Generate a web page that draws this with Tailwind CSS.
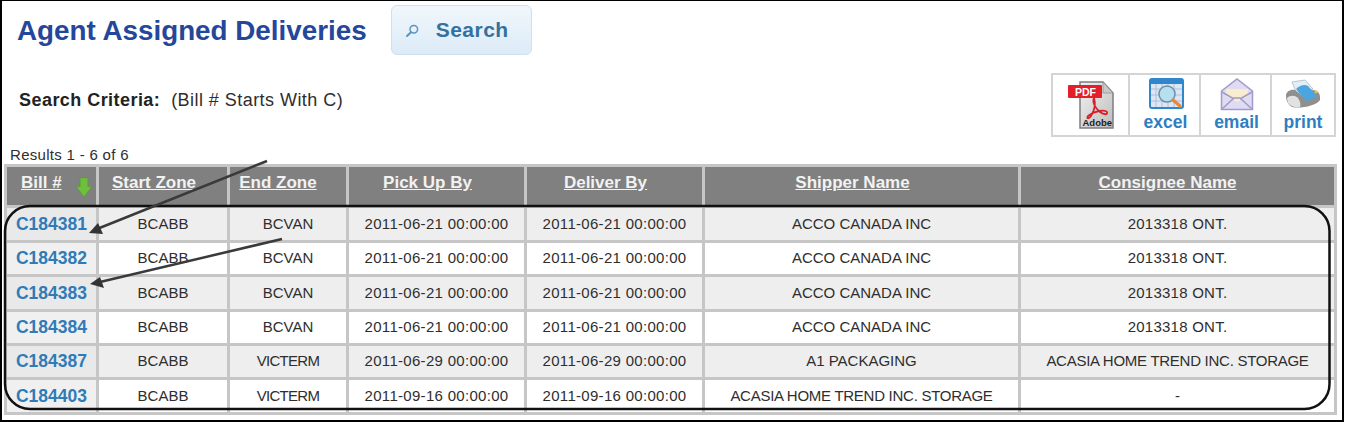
<!DOCTYPE html>
<html>
<head>
<meta charset="utf-8">
<script src="https://cdn.jsdelivr.net/npm/@tailwindcss/browser@4"></script>
</head>
<body class="bg-white">
<div class="relative w-[1344px] h-[422px] overflow-hidden bg-white font-['Liberation_Sans',Arial,sans-serif] text-[#2e2e2e]">
  <div class="absolute left-0 top-0 w-[1344px] h-[422px] border-t border-l-2 border-r-2 border-b-2 border-black pointer-events-none"></div>
  <div class="flex items-start h-[73px] pl-[17px] pt-[5px]">
    <h1 class="mt-[9px] text-[27.8px] leading-[34px] font-bold text-[#25479b]">Agent Assigned Deliveries</h1>
    <button class="ml-[24px] flex items-center w-[141px] h-[50px] pl-[12px] rounded-[6px] border border-[#cfe0ee] bg-gradient-to-b from-[#f1f7fc] to-[#dcebf7]">
      <svg width="16" height="16" viewBox="0 0 16 16" fill="none" class="mr-[16px] mt-[2px]"><circle cx="9.8" cy="6.2" r="3.8" stroke="#5b95c0" stroke-width="1.5"/><path d="M7 9.2 3 13" stroke="#5b95c0" stroke-width="2" stroke-linecap="round"/></svg>
      <span class="text-[21px] font-bold tracking-[0.5px] text-[#34719f]">Search</span>
    </button>
  </div>
  <div class="flex items-start justify-between h-[71px] pl-[19px] pr-[8px]">
    <p class="mt-[16px] text-[18px] leading-[22px] tracking-[0.45px]"><b class="text-[#222]">Search Criteria:</b>&nbsp; (Bill # Starts With C)</p>
    <div class="flex h-[64px] border-2 border-[#d4d4d4] text-[17.5px] font-bold text-[#2f7fc0] text-center">
      <div class="w-[77px] flex items-center justify-center border-r-2 border-[#d4d4d4]">
        <svg width="48" height="50" viewBox="0 0 48 50">
          <defs><linearGradient id="doc" x1="0" y1="0" x2="1" y2="1"><stop offset="0" stop-color="#f2f2f2"/><stop offset="1" stop-color="#bdbdbd"/></linearGradient></defs>
          <path d="M13 2H36L46 13V48H13Z" fill="url(#doc)" stroke="#7e7e7e" stroke-width="1.5"/>
          <path d="M36 2V13H46Z" fill="#c9c9c9" stroke="#8a8a8a" stroke-width=".7"/>
          <rect x="1" y="5" width="34" height="13" rx="1" fill="#e3202a"/>
          <text x="8" y="15.5" font-size="10.5" font-weight="700" fill="#fff" font-family="Liberation Sans">PDF</text>
          <path d="M27 18c-2 4 1 10 6 14 4 3 8 3 7 0-2-3-13-1-19 4-2 3 1 3 3 0 3-5 5-12 3-18z" fill="none" stroke="#d8202a" stroke-width="1.8"/>
          <text x="15.5" y="46" font-size="9.5" font-weight="700" fill="#1c1c1c" font-family="Liberation Sans">Adobe</text>
        </svg>
      </div>
      <div class="w-[71px] flex flex-col items-center pt-[3px] pl-[2px] border-r-2 border-[#d4d4d4]">
        <svg width="36" height="32" viewBox="0 0 36 32">
          <rect x="2" y="1" width="33" height="29" rx="2" fill="#dde6f4" stroke="#2f86cc" stroke-width="2"/>
          <rect x="2" y="1" width="33" height="5" fill="#2f86cc"/>
          <path d="M8 6v23M14 6v23M20 6v23M26 6v23M3 11h31M3 17h31M3 23h31" stroke="#aebfd8"/>
          <circle cx="19" cy="16" r="8" fill="#b7e0ef" stroke="#6a8fae" stroke-width="1.5"/>
          <path d="M25 22l7 6" stroke="#e8893a" stroke-width="3.4" stroke-linecap="round"/>
        </svg>
        <span class="leading-[18px] mt-[3px]">excel</span>
      </div>
      <div class="w-[71px] flex flex-col items-center pt-[3px] pl-[2px] border-r-2 border-[#d4d4d4]">
        <svg width="34" height="33" viewBox="0 0 34 33">
          <path d="M1.500 13 17 1 32.500 13V31.500H1.500Z" fill="#dedbf3" stroke="#a09bc8" stroke-width="1.5"/>
          <path d="M6 11h22v7l-11 6-11-6z" fill="#f8edd0"/>
          <path d="M2 31 14 20h6l12 11M2 14l12 7M32 14l-12 7" fill="none" stroke="#a09bc8" stroke-width="1.5"/>
        </svg>
        <span class="leading-[18px] mt-[2px]">email</span>
      </div>
      <div class="w-[62px] flex flex-col items-center pt-[4px]">
        <svg width="36" height="31" viewBox="0 0 36 31">
          <path d="M7 3 20 1l8 9-16 5z" fill="#e4eef5" stroke="#b4c6d4"/>
          <path d="M1 17c0-5 5-7 9-6l6 5 12-5c4 0 7 3 7 7v3c-4 6-20 9-28 7-4-2-6-7-6-11z" fill="#8f8f8f"/>
          <path d="M11 10c4-4 9-5 12-3l9 10-9 5c-5-3-9-8-12-12z" fill="#4aa6e0"/>
          <path d="M2 19c3-3 8-3 11 0 2 3 3 6 2 9-5 1-10-1-12-4z" fill="#e2e2e2"/>
          <circle cx="31" cy="13" r="1.500" fill="#e9c04a"/>
        </svg>
        <span class="leading-[18px] mt-[3px]">print</span>
      </div>
    </div>
  </div>
  <p class="absolute left-[10px] top-[146px] text-[15px] leading-[18px] tracking-[0.3px]">Results 1 - 6 of 6</p>
  <div class="absolute left-[4px] top-[164px] w-[1334px]">
    <table class="w-[1333px] table-fixed border-collapse border-[3px] border-[#c6c6c6] text-[15px] text-center">
      <thead>
        <tr class="h-[41px] bg-[#808080] text-[17px] font-bold text-[#f2f2f2] underline">
          <th class="w-[92px] border-[3px] border-[#c6c6c6] text-left pl-[14px] pb-[7px] relative">Bill #
            <svg class="absolute left-[68px] top-[10px]" width="18" height="21" viewBox="0 0 18 22"><path d="M5 1h8v9h4l-8 11-8-11h4z" fill="#6fbf3e" stroke="#4f9e2a" stroke-width=".6"/></svg>
          </th>
          <th class="w-[131px] border-[3px] border-[#c6c6c6] pb-[7px] pr-[18px]">Start Zone</th>
          <th class="w-[119px] border-[3px] border-[#c6c6c6] pb-[7px] pr-[20px]">End Zone</th>
          <th class="w-[178px] border-[3px] border-[#c6c6c6] pb-[7px] pr-[18px]">Pick Up By</th>
          <th class="w-[178px] border-[3px] border-[#c6c6c6] pb-[7px] pr-[18px]">Deliver By</th>
          <th class="w-[316px] border-[3px] border-[#c6c6c6] pb-[7px] pr-[18px]">Shipper Name</th>
          <th class="border-[3px] border-[#c6c6c6] pb-[7px] pr-[20px]">Consignee Name</th>
        </tr>
      </thead>
      <tbody>
        <tr class="h-[35px] bg-[#eeeeee]"><td class="border-[3px] border-[#c6c6c6] bg-[#e9e9e9] text-[17.5px] font-bold text-[#2f7bb8]">C184381</td><td class="border-[3px] border-[#c6c6c6]">BCABB</td><td class="border-[3px] border-[#c6c6c6]">BCVAN</td><td class="border-[3px] border-[#c6c6c6] tracking-[0.3px]">2011-06-21 00:00:00</td><td class="border-[3px] border-[#c6c6c6] tracking-[0.3px]">2011-06-21 00:00:00</td><td class="border-[3px] border-[#c6c6c6]">ACCO CANADA INC</td><td class="border-[3px] border-[#c6c6c6] tracking-[0.25px]">2013318 ONT.</td></tr>
        <tr class="h-[34px] bg-white"><td class="border-[3px] border-[#c6c6c6] bg-[#f0f0f0] text-[17.5px] font-bold text-[#2f7bb8]">C184382</td><td class="border-[3px] border-[#c6c6c6]">BCABB</td><td class="border-[3px] border-[#c6c6c6]">BCVAN</td><td class="border-[3px] border-[#c6c6c6] tracking-[0.3px]">2011-06-21 00:00:00</td><td class="border-[3px] border-[#c6c6c6] tracking-[0.3px]">2011-06-21 00:00:00</td><td class="border-[3px] border-[#c6c6c6]">ACCO CANADA INC</td><td class="border-[3px] border-[#c6c6c6] tracking-[0.25px]">2013318 ONT.</td></tr>
        <tr class="h-[35px] bg-[#eeeeee]"><td class="border-[3px] border-[#c6c6c6] bg-[#e9e9e9] text-[17.5px] font-bold text-[#2f7bb8]">C184383</td><td class="border-[3px] border-[#c6c6c6]">BCABB</td><td class="border-[3px] border-[#c6c6c6]">BCVAN</td><td class="border-[3px] border-[#c6c6c6] tracking-[0.3px]">2011-06-21 00:00:00</td><td class="border-[3px] border-[#c6c6c6] tracking-[0.3px]">2011-06-21 00:00:00</td><td class="border-[3px] border-[#c6c6c6]">ACCO CANADA INC</td><td class="border-[3px] border-[#c6c6c6] tracking-[0.25px]">2013318 ONT.</td></tr>
        <tr class="h-[34px] bg-white"><td class="border-[3px] border-[#c6c6c6] bg-[#f0f0f0] text-[17.5px] font-bold text-[#2f7bb8]">C184384</td><td class="border-[3px] border-[#c6c6c6]">BCABB</td><td class="border-[3px] border-[#c6c6c6]">BCVAN</td><td class="border-[3px] border-[#c6c6c6] tracking-[0.3px]">2011-06-21 00:00:00</td><td class="border-[3px] border-[#c6c6c6] tracking-[0.3px]">2011-06-21 00:00:00</td><td class="border-[3px] border-[#c6c6c6]">ACCO CANADA INC</td><td class="border-[3px] border-[#c6c6c6] tracking-[0.25px]">2013318 ONT.</td></tr>
        <tr class="h-[34px] bg-[#eeeeee]"><td class="border-[3px] border-[#c6c6c6] bg-[#e9e9e9] text-[17.5px] font-bold text-[#2f7bb8]">C184387</td><td class="border-[3px] border-[#c6c6c6]">BCABB</td><td class="border-[3px] border-[#c6c6c6] tracking-[-0.7px]">VICTERM</td><td class="border-[3px] border-[#c6c6c6] tracking-[0.3px]">2011-06-29 00:00:00</td><td class="border-[3px] border-[#c6c6c6] tracking-[0.3px]">2011-06-29 00:00:00</td><td class="border-[3px] border-[#c6c6c6]">A1 PACKAGING</td><td class="border-[3px] border-[#c6c6c6] tracking-[-0.27px]">ACASIA HOME TREND INC. STORAGE</td></tr>
        <tr class="h-[35px] bg-white"><td class="border-[3px] border-[#c6c6c6] bg-[#f0f0f0] text-[17.5px] font-bold text-[#2f7bb8]">C184403</td><td class="border-[3px] border-[#c6c6c6]">BCABB</td><td class="border-[3px] border-[#c6c6c6] tracking-[-0.7px]">VICTERM</td><td class="border-[3px] border-[#c6c6c6] tracking-[0.3px]">2011-09-16 00:00:00</td><td class="border-[3px] border-[#c6c6c6] tracking-[0.3px]">2011-09-16 00:00:00</td><td class="border-[3px] border-[#c6c6c6] tracking-[-0.27px]">ACASIA HOME TREND INC. STORAGE</td><td class="border-[3px] border-[#c6c6c6]">-</td></tr>
      </tbody>
    </table>
  </div>
  <svg class="absolute left-0 top-0 pointer-events-none" width="1344" height="422" viewBox="0 0 1344 422" fill="none">
    <rect x="5" y="206" width="1324.500" height="203" rx="25" stroke="#111" stroke-width="2.500"/>
    <path d="M267 161 97 229" stroke="#3a3a3a" stroke-width="2.500"/>
    <path d="M89 233 98 223 103 234Z" fill="#333"/>
    <path d="M282 239 100 282" stroke="#3a3a3a" stroke-width="2.500"/>
    <path d="M90 284 100 277 104 288Z" fill="#333"/>
  </svg>
</div>
</body>
</html>
